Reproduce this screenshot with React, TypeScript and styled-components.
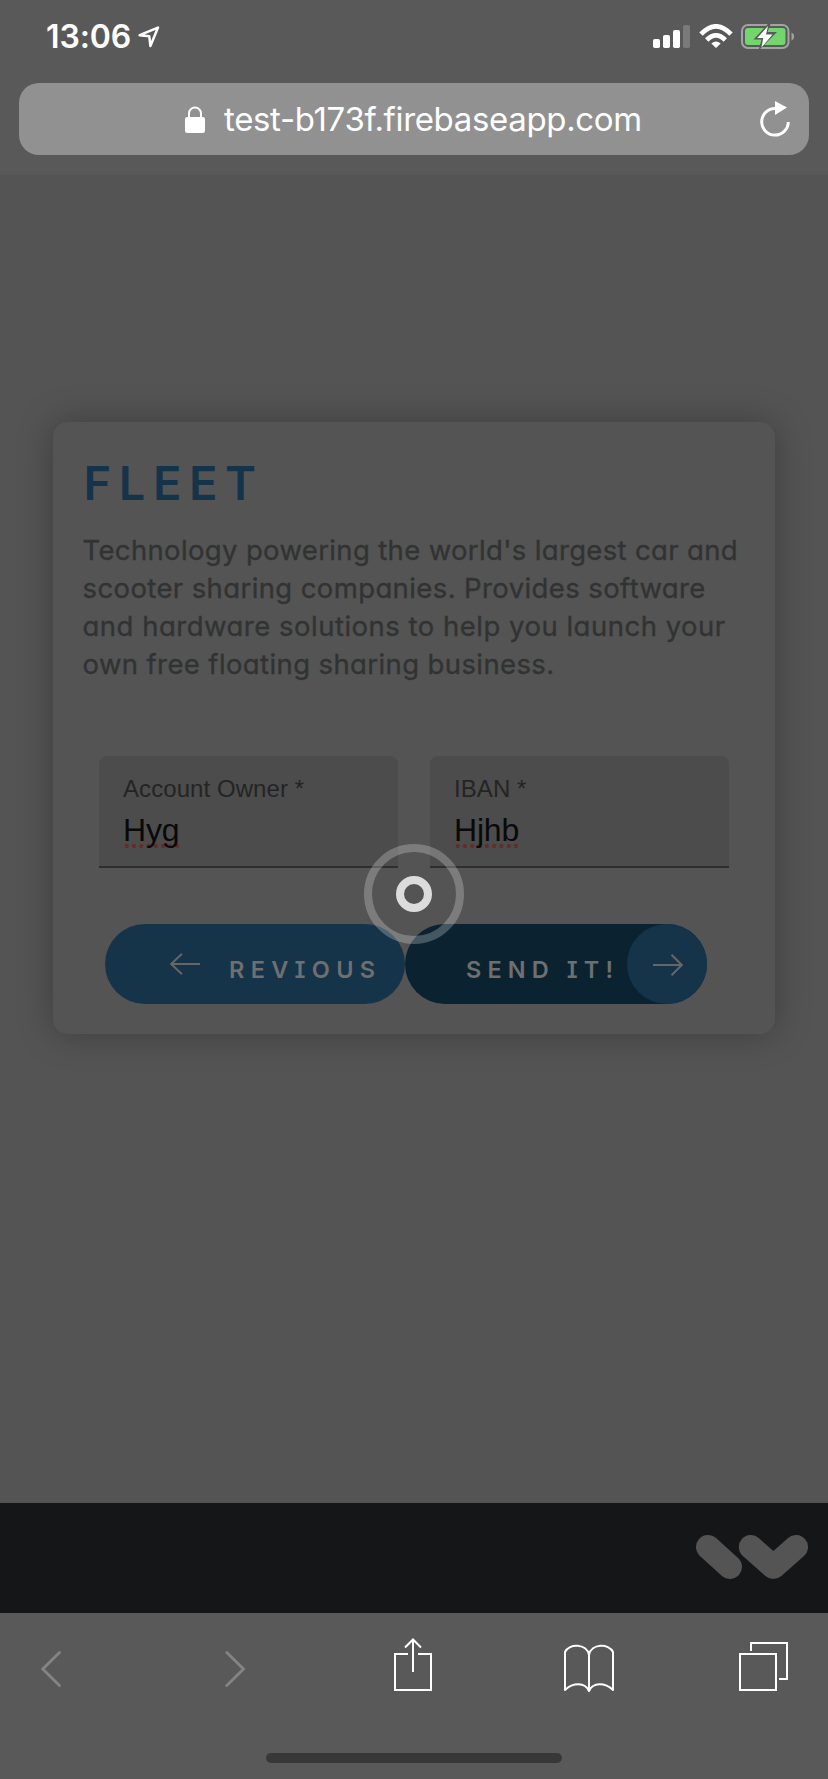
import React from "react";
import styled, { createGlobalStyle } from "styled-components";

const GlobalStyle = createGlobalStyle`
  * { box-sizing: border-box; }
  body { margin: 0; background: #545454; }
`;

const Screen = styled.div`
  position: relative;
  display: flex;
  flex-direction: column;
  width: 828px;
  height: 1779px;
  overflow: hidden;
  background: #545454;
  font-family: Inter, sans-serif;
`;

const BrowserHeader = styled.header`
  display: flex;
  flex-direction: column;
  height: 175px;
  background: #595959;
`;

const StatusBar = styled.div`
  display: flex;
  align-items: flex-start;
  justify-content: space-between;
  height: 83px;
  padding: 17px 33px 0 46px;
  color: #fff;
`;

const Clock = styled.div`
  display: flex;
  align-items: flex-start;
  gap: 7px;
  font-size: 32px;
  line-height: 40px;
  font-weight: 600;
  letter-spacing: -0.1px;
  svg { margin-top: 9px; }
`;

const StatusIcons = styled.div`
  display: flex;
  align-items: flex-start;
  gap: 8.5px;
  padding-top: 7px;
`;

const AddressBar = styled.div`
  display: flex;
  align-items: center;
  width: 790px;
  height: 72px;
  margin-left: 19px;
  padding: 0 19px 0 166px;
  border-radius: 20px;
  background: #919191;
  color: #fff;
`;

const Address = styled.span`
  flex: 1;
  margin-left: 19px;
  font-size: 33px;
  line-height: 44px;
  letter-spacing: -0.34px;
  white-space: nowrap;
`;

const Page = styled.main`
  flex: 1;
  padding: 247px 53px 0;
`;

const Card = styled.section`
  height: 612px;
  padding: 30px 30px 0 29px;
  border-radius: 15px;
  background: #545454;
  box-shadow: 0 0 36px rgba(0, 0, 0, 0.28);
`;

const Title = styled.h1`
  margin: 0;
  padding-left: 1.5px;
  color: #153449;
  font-size: 47px;
  line-height: 62px;
  font-weight: 600;
  letter-spacing: 7.6px;
`;

const Description = styled.p`
  margin: 17px 0 0;
  padding-left: 0.5px;
  color: #313333;
  font-size: 27.5px;
  line-height: 38px;
  font-feature-settings: "cv11";
  -webkit-text-stroke: 0.35px #313333;
`;

const Line = styled.span<{ $spacing: number }>`
  display: block;
  white-space: nowrap;
  letter-spacing: ${(p) => p.$spacing}px;
`;

const Fields = styled.div`
  display: flex;
  gap: 32px;
  margin: 73px 0 0 17px;
`;

const Field = styled.label`
  display: flex;
  flex-direction: column;
  align-items: flex-start;
  width: 299px;
  height: 112px;
  padding: 19px 24px 0;
  border-bottom: 2px solid #2e2e2e;
  border-radius: 8px 8px 0 0;
  background: #4c4c4c;
  font-family: "Liberation Sans", Arial, sans-serif;
`;

const FieldLabel = styled.span`
  color: #242424;
  font-size: 24px;
  line-height: 28px;
  letter-spacing: 0.07px;
`;

const FieldValue = styled.span`
  margin-top: 8px;
  height: 38px;
  color: #090909;
  font-size: 32px;
  line-height: 38px;
  letter-spacing: -0.2px;
  background: radial-gradient(circle, #612d29 1.9px, transparent 2.4px) 0 32px / 7.3px 6px repeat-x;
`;

const Actions = styled.div`
  display: flex;
  margin: 56px 0 0 23px;
`;

const ActionButton = styled.button<{ $dark?: boolean }>`
  display: flex;
  align-items: center;
  width: ${(p) => (p.$dark ? 302 : 300)}px;
  height: 80px;
  padding: 0 0 0 ${(p) => (p.$dark ? 61 : 65)}px;
  border: 0;
  border-radius: 40px;
  background: ${(p) => (p.$dark ? "#0b2330" : "#153449")};
  justify-content: ${(p) => (p.$dark ? "space-between" : "flex-start")};
  color: #6f6f6f;
  font: 600 23.5px/30px Inter, sans-serif;
  font-feature-settings: "cv08";
`;

const ActionText = styled.span<{ $spacing: number; $indent?: number }>`
  padding-top: 12px;
  margin-left: ${(p) => p.$indent ?? 0}px;
  letter-spacing: ${(p) => p.$spacing}px;
  white-space: nowrap;
`;

const ArrowCircle = styled.span`
  display: flex;
  align-items: center;
  justify-content: center;
  flex: none;
  width: 80px;
  height: 80px;
  padding: 2px 0 0 2px;
  border-radius: 50%;
  background: #153449;
`;

const Footer = styled.footer`
  display: flex;
  align-items: flex-start;
  justify-content: flex-end;
  height: 110px;
  padding: 32px 20px 0 0;
  background: #151618;
`;

const BrowserToolbar = styled.nav`
  display: flex;
  flex-direction: column;
  align-items: center;
  justify-content: space-between;
  height: 166px;
  padding-bottom: 16px;
  background: #595959;
`;

const ToolbarIcons = styled.div`
  display: grid;
  grid-template-columns: 184px 169px 170px 175px 49px;
  width: 100%;
  padding: 25px 40px 0 41px;
`;

const HomeIndicator = styled.div`
  width: 296px;
  height: 10px;
  border-radius: 5px;
  background: #383838;
`;

const Spinner = styled.div`
  position: absolute;
  left: 364px;
  top: 844px;
  display: flex;
  align-items: center;
  justify-content: center;
  width: 100px;
  height: 100px;
  border: 8px solid rgba(255, 255, 255, 0.24);
  border-radius: 50%;
`;

const SpinnerCore = styled.div`
  width: 36px;
  height: 36px;
  border: 8px solid #dcdcdc;
  border-radius: 50%;
`;

const LocationIcon = () => (
  <svg width="22" height="22" viewBox="0 0 22 22" fill="none" stroke="#fff" strokeWidth="2.5" strokeLinejoin="round">
    <path d="M1.6 9.2 20 1.6 12.4 20 11.3 10.3Z" />
  </svg>
);

const SignalIcon = () => (
  <svg width="37" height="24" viewBox="0 0 37 24" fill="#fff">
    <rect x="0" y="15" width="7" height="9" rx="1.8" />
    <rect x="10" y="11" width="7" height="13" rx="1.8" />
    <rect x="20" y="6" width="7" height="18" rx="1.8" />
    <rect x="30" y="1" width="7" height="23" rx="1.8" opacity=".2" />
  </svg>
);

const WifiIcon = () => (
  <svg width="34" height="24" viewBox="0 0 34 24">
    <g fill="none" stroke="#fff" strokeWidth="4.7">
      <path d="M2 10.2Q17-5.6 32 10.2" />
      <path d="M7.7 16Q17 6.6 26.3 16" />
    </g>
    <path d="M12.3 19.4Q17 15.5 21.7 19.4L17 24Z" fill="#fff" />
  </svg>
);

const BatteryIcon = () => (
  <svg width="54" height="26" viewBox="0 0 54 26">
    <rect x="1" y="1" width="46.5" height="23" rx="6" fill="none" stroke="#a3a3a3" strokeWidth="2" />
    <path d="M50.5 8.5c3.4 1.2 3.4 6.8 0 8Z" fill="#a3a3a3" />
    <rect x="4" y="4" width="40.5" height="17" rx="3" fill="#73d66d" />
    <path d="M28.3-1.5 12.5 15.5H20.5L17.5 26.5 36 8H26.5L30-1Z" fill="#595959" />
    <path d="M27 2 16.2 14H22.2L20.5 23.5 31.5 10.5H25Z" fill="#fff" />
  </svg>
);

const LockIcon = () => (
  <svg width="20" height="27" viewBox="0 0 20 27">
    <path d="M4 13V7.5a6 6 0 0 1 12 0V13" fill="none" stroke="#fff" strokeWidth="2" />
    <rect y="11" width="20" height="16" rx="2.2" fill="#fff" />
  </svg>
);

const ReloadIcon = () => (
  <svg width="30" height="36" viewBox="0 0 30 36">
    <path d="M15.5 7.5A13.3 13.3 0 1 0 28.3 21" fill="none" stroke="#fff" strokeWidth="3" />
    <path d="M15 0 27 6.5 15 14Z" fill="#fff" />
  </svg>
);

const ArrowIcon = ({ left }: { left?: boolean }) => (
  <svg width="30" height="22" viewBox="0 0 30 22" fill="none" stroke="#666" strokeWidth="2">
    {left ? <path d="M30 11H1M12 .8 1.2 11 12 21.2" /> : <path d="M0 11H29M18.5.8 28.8 11 18.5 21.2" />}
  </svg>
);

const BrandLogo = () => (
  <svg width="112" height="44" viewBox="0 0 112 44" fill="none" stroke="#545454" strokeWidth="24" strokeLinecap="round" strokeLinejoin="round">
    <path d="M12 12 34 32M54.8 12 77.4 32 100 12" />
  </svg>
);

const ChevronIcon = ({ left }: { left?: boolean }) => (
  <svg width="22" height="60" viewBox="0 0 22 60" fill="none" stroke="#848484" strokeWidth="2.8" strokeLinecap="round">
    {left ? <path d="M18.5 14.5 1.8 31 18.5 47.5" /> : <path d="M1.8 14.5 18.5 31 1.8 47.5" />}
  </svg>
);

const ShareIcon = () => (
  <svg width="38" height="60" viewBox="0 0 38 60" fill="none" stroke="#fff" strokeWidth="2">
    <path d="M14 16H1V52H37V16H24" />
    <path d="M19 34V1.500M11 9.500 19 1.500 27 9.500" />
  </svg>
);

const BookIcon = () => (
  <svg width="50" height="60" viewBox="0 0 50 60" fill="none" stroke="#fff" strokeWidth="2" strokeLinejoin="round">
    <path d="M25 53V17C23 5.500 5 5 1 14V52C9 44.500 21 44 25 53C29 44 41 44.500 49 52V14C45 5 27 5.500 25 17" />
  </svg>
);

const TabsIcon = () => (
  <svg width="49" height="60" viewBox="0 0 49 60" fill="none" stroke="#fff" strokeWidth="2">
    <rect x="1" y="16" width="36" height="36" />
    <path d="M12 13V5H48V41H40" />
  </svg>
);

const descriptionLines = [
  { text: "Technology powering the world's largest car and", spacing: 0.35 },
  { text: "scooter sharing companies. Provides software", spacing: 0.39 },
  { text: "and hardware solutions to help you launch your", spacing: 0.5 },
  { text: "own free floating sharing business.", spacing: 0.39 },
];

export default function App() {
  return (
    <Screen>
      <GlobalStyle />
      <BrowserHeader>
        <StatusBar>
          <Clock>
            13:06
            <LocationIcon />
          </Clock>
          <StatusIcons>
            <SignalIcon />
            <WifiIcon />
            <BatteryIcon />
          </StatusIcons>
        </StatusBar>
        <AddressBar>
          <LockIcon />
          <Address>test-b173f.firebaseapp.com</Address>
          <ReloadIcon />
        </AddressBar>
      </BrowserHeader>
      <Page>
        <Card>
          <Title>FLEET</Title>
          <Description>
            {descriptionLines.map((line) => (
              <Line key={line.text} $spacing={line.spacing}>
                {line.text}
              </Line>
            ))}
          </Description>
          <Fields>
            <Field>
              <FieldLabel>Account Owner *</FieldLabel>
              <FieldValue>Hyg</FieldValue>
            </Field>
            <Field>
              <FieldLabel>IBAN *</FieldLabel>
              <FieldValue>Hjhb</FieldValue>
            </Field>
          </Fields>
          <Actions>
            <ActionButton>
              <ArrowIcon left />
              <ActionText $spacing={6.3} $indent={29}>REVIOUS</ActionText>
            </ActionButton>
            <ActionButton $dark>
              <ActionText $spacing={6.1}>SEND IT!</ActionText>
              <ArrowCircle>
                <ArrowIcon />
              </ArrowCircle>
            </ActionButton>
          </Actions>
        </Card>
      </Page>
      <Footer>
        <BrandLogo />
      </Footer>
      <BrowserToolbar>
        <ToolbarIcons>
          <ChevronIcon left />
          <ChevronIcon />
          <ShareIcon />
          <BookIcon />
          <TabsIcon />
        </ToolbarIcons>
        <HomeIndicator />
      </BrowserToolbar>
      <Spinner>
        <SpinnerCore />
      </Spinner>
    </Screen>
  );
}
